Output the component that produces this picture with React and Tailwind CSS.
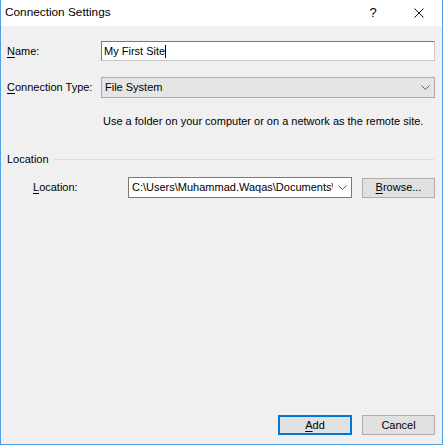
// Windows-style "Connection Settings" dialog
const font = { fontFamily: '"Liberation Sans", Arial, sans-serif' };

function Chevron({ className = "" }) {
  return (
    <svg width="9" height="5" viewBox="0 0 9 5" className={className}>
      <path d="M0.5 0.5 L4.5 4.5 L8.5 0.5" fill="none" stroke="#5f5f5f" strokeWidth="1" />
    </svg>
  );
}

function U({ children }) {
  return <span className="underline underline-offset-[2px]">{children}</span>;
}

export default function App() {
  return (
    <div
      className="w-[443px] h-[445px] flex flex-col bg-[#f0f0f0] border-x border-b border-[#4ea1e6] text-[11px] text-black whitespace-nowrap"
      style={font}
    >
      {/* title bar */}
      <div className="h-[26px] bg-white flex items-center pl-[4px] shrink-0">
        <span className="flex-1 text-[11.8px]">Connection Settings</span>
        <span className="w-[20px] text-center text-[13px] mr-[11px]">?</span>
        <div className="w-[48px] flex justify-center pl-[2px]">
          <svg width="10" height="10" viewBox="0 0 10 10">
            <path d="M0.5 0.5 L9.5 9.5 M9.5 0.5 L0.5 9.5" stroke="#111" strokeWidth="1" />
          </svg>
        </div>
      </div>

      <div className="flex-1 flex flex-col pl-[6px] pr-[7px]">
        {/* Name */}
        <div className="flex items-center mt-[15px] h-[20px]">
          <span className="w-[94px]"><U>N</U>ame:</span>
          <div className="flex-1 h-[20px] bg-white border border-[#7a7a7a] border-b-[#c8c8c8] border-r-[#c8c8c8] flex items-center pl-[2px]">
            My First Site<span className="w-px h-[13px] bg-black" />
          </div>
        </div>

        {/* Connection type */}
        <div className="flex items-center mt-[16px] h-[21px]">
          <span className="w-[94px]"><U>C</U>onnection Type:</span>
          <div className="flex-1 h-[21px] bg-[#e5e5e5] border border-[#acacac] flex items-center pl-[3px] pr-[4px]">
            <span className="flex-1">File System</span>
            <Chevron />
          </div>
        </div>

        <p className="ml-[96px] mt-[15px] leading-[16px]">
          Use a folder on your computer or on a network as the remote site.
        </p>

        {/* Location group */}
        <div className="flex items-center mt-[22px] h-[16px]">
          <span>Location</span>
          <div className="flex-1 h-px bg-[#dcdcdc] ml-[5px] mr-px" />
        </div>

        <div className="flex items-center mt-[10px] h-[21px]">
          <span className="w-[95px] ml-[26px]"><U>L</U>ocation:</span>
          <div className="w-[224px] h-[21px] bg-white border border-[#7a7a7a] flex items-center pl-[3px] pr-[4px]">
            <span className="flex-1 overflow-hidden">C:\Users\Muhammad.Waqas\Documents\</span>
            <Chevron className="ml-[5px] shrink-0" />
          </div>
          <button className="ml-[10px] w-[73px] h-[20px] bg-[#e1e1e1] border border-[#adadad]">
            <U>B</U>rowse...
          </button>
        </div>

        <div className="flex-1" />

        {/* footer */}
        <div className="flex justify-end gap-[10px] mb-[9px]">
          <button className="w-[74px] h-[20px] bg-[#e1e1e1] border-2 border-[#0078d7]">
            <U>A</U>dd
          </button>
          <button className="w-[73px] h-[20px] bg-[#e1e1e1] border border-[#adadad]">Cancel</button>
        </div>
      </div>
    </div>
  );
}
